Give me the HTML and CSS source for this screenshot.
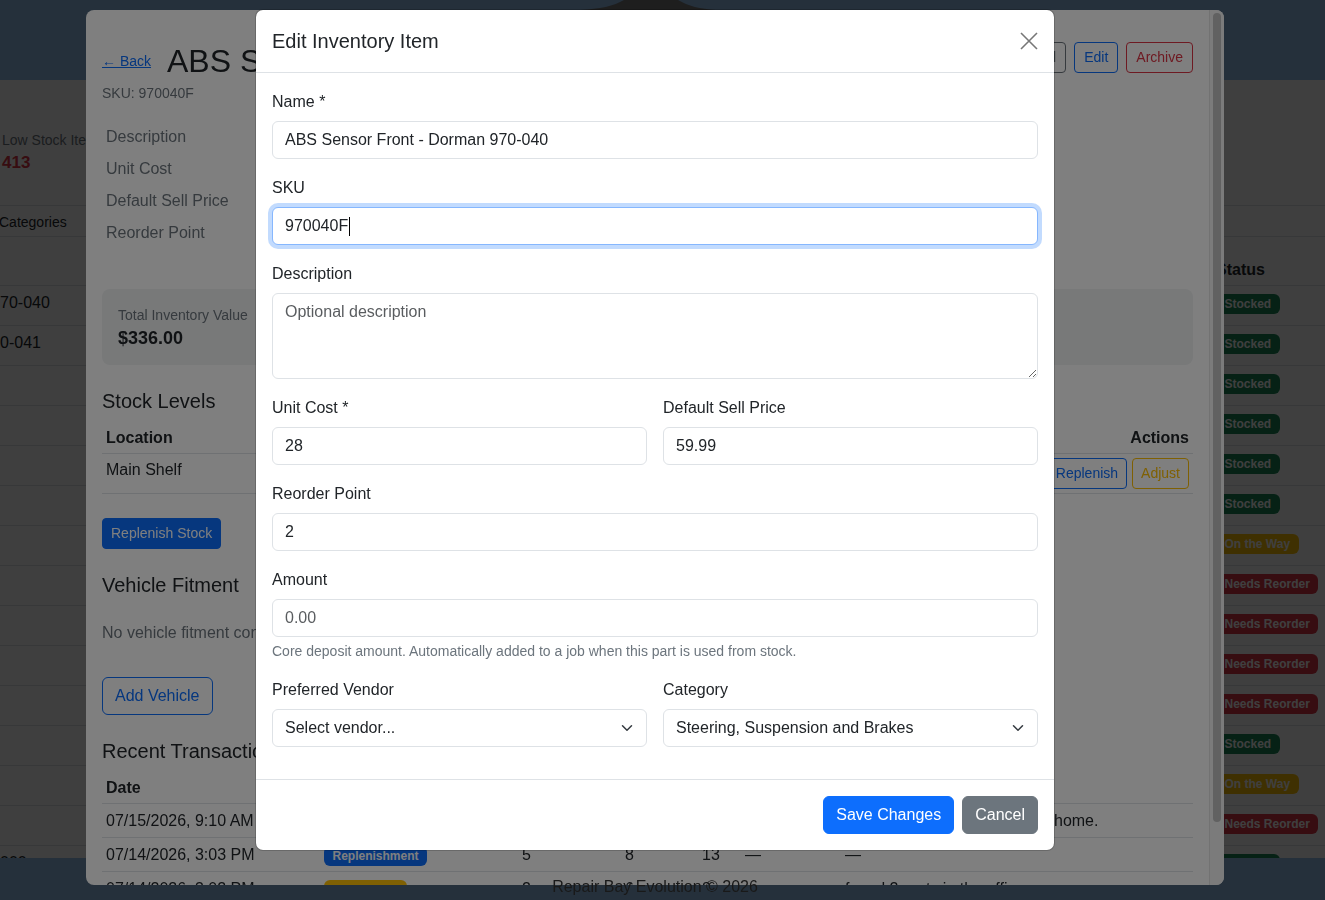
FILE: index.html
```html
<!DOCTYPE html>
<html lang="en">
<head>
  <meta charset="UTF-8" />
  <meta name="viewport" content="width=device-width, initial-scale=1.0" />
  <title>Inventory - ABS Sensor Front</title>
  <link rel="stylesheet" href="styles.css">
</head>
<body>
  <!-- inventory list behind both dialogs -->
  <div class="app">
    <header class="topbar">
      <svg class="brand" width="140" height="10" viewBox="0 0 140 10"><path d="M0 10C20 9 34 6 44 0H98C108 6 120 9 136 10Z"/></svg>
    </header>
    <main class="inventory">
      <div class="stat-strip">
        <div class="stat-label">Low Stock Items</div>
        <div class="stat-value">413</div>
      </div>
      <div class="filter-row">Categories</div>
      <table class="inv-table">
        <colgroup><col class="c-part"><col class="c-status"></colgroup>
        <thead><tr><th></th><th>Status</th></tr></thead>
        <tbody>
          <tr><td>70-040</td><td><span class="badge bg-success">Stocked</span></td></tr>
          <tr><td>0-041</td><td><span class="badge bg-success">Stocked</span></td></tr>
          <tr><td></td><td><span class="badge bg-success">Stocked</span></td></tr>
          <tr><td></td><td><span class="badge bg-success">Stocked</span></td></tr>
          <tr><td></td><td><span class="badge bg-success">Stocked</span></td></tr>
          <tr><td></td><td><span class="badge bg-success">Stocked</span></td></tr>
          <tr><td></td><td><span class="badge bg-warning">On the Way</span></td></tr>
          <tr><td></td><td><span class="badge bg-danger">Needs Reorder</span></td></tr>
          <tr><td></td><td><span class="badge bg-danger">Needs Reorder</span></td></tr>
          <tr><td></td><td><span class="badge bg-danger">Needs Reorder</span></td></tr>
          <tr><td></td><td><span class="badge bg-danger">Needs Reorder</span></td></tr>
          <tr><td></td><td><span class="badge bg-success">Stocked</span></td></tr>
          <tr><td></td><td><span class="badge bg-warning">On the Way</span></td></tr>
          <tr><td></td><td><span class="badge bg-danger">Needs Reorder</span></td></tr>
          <tr><td>000</td><td><span class="badge bg-success">Stocked</span></td></tr>
        </tbody>
      </table>
    </main>
    <footer class="site-footer"></footer>
  </div>

  <div class="backdrop"></div>

  <!-- item detail dialog -->
  <div class="detail">
    <div class="detail-body">
      <div class="detail-head">
        <div>
          <div class="title-row">
            <a class="back" href="#">&larr; Back</a>
            <h2 class="item-title">ABS Sensor Front - Dorman 970-040</h2>
          </div>
          <p class="sku">SKU: 970040F</p>
        </div>
        <div class="head-actions">
          <button class="btn btn-sm btn-outline-secondary">Print Label</button>
          <button class="btn btn-sm btn-outline-primary">Edit</button>
          <button class="btn btn-sm btn-outline-danger">Archive</button>
        </div>
      </div>

      <dl class="facts">
        <dt>Description</dt><dd>&mdash;</dd>
        <dt>Unit Cost</dt><dd>$28.00</dd>
        <dt>Default Sell Price</dt><dd>$59.99</dd>
        <dt>Reorder Point</dt><dd>2</dd>
      </dl>

      <div class="summary">
        <div>
          <div class="summary-label">Total Inventory Value</div>
          <div class="summary-value">$336.00</div>
        </div>
        <div>
          <div class="summary-label">On Hand</div>
          <div class="summary-value">12</div>
        </div>
        <div>
          <div class="summary-label">Locations</div>
          <div class="summary-value">1</div>
        </div>
      </div>

      <section class="section">
        <h5 class="section-title">Stock Levels</h5>
        <table class="data-table">
          <thead>
            <tr><th class="c-loc">Location</th><th>On Hand</th><th>Min</th><th>Max</th><th class="c-act text-end">Actions</th></tr>
          </thead>
          <tbody>
            <tr>
              <td>Main Shelf</td><td>12</td><td>2</td><td>&mdash;</td>
              <td class="c-act">
                <div class="row-actions">
                  <button class="btn btn-sm btn-outline-primary">Replenish</button>
                  <button class="btn btn-sm btn-outline-warning">Adjust</button>
                </div>
              </td>
            </tr>
          </tbody>
        </table>
        <button class="btn btn-sm btn-primary">Replenish Stock</button>
      </section>

      <section class="section">
        <h5 class="section-title">Vehicle Fitment</h5>
        <p class="empty-note">No vehicle fitment configured for this part.</p>
        <button class="btn btn-outline-primary">Add Vehicle</button>
      </section>

      <section class="section">
        <h5 class="section-title">Recent Transactions</h5>
        <table class="data-table tx-table">
          <colgroup>
            <col style="width:218px"><col style="width:198px"><col style="width:103px"><col style="width:77px">
            <col style="width:43px"><col style="width:100px"><col style="width:352px">
          </colgroup>
          <thead>
            <tr><th>Date</th><th>Type</th><th>Change</th><th>Before</th><th>After</th><th>Job</th><th>Notes</th></tr>
          </thead>
          <tbody>
            <tr><td>07/15/2026, 9:10 AM</td><td><span class="badge bg-secondary">Usage</span></td><td>-1</td><td>13</td><td>12</td><td>&mdash;</td><td>Customer took an old sensor home.</td></tr>
            <tr><td>07/14/2026, 3:03 PM</td><td><span class="badge bg-primary">Replenishment</span></td><td>5</td><td>8</td><td>13</td><td>&mdash;</td><td>&mdash;</td></tr>
            <tr><td>07/14/2026, 3:02 PM</td><td><span class="badge bg-warning">Adjustment</span></td><td>2</td><td>6</td><td>8</td><td>&mdash;</td><td>found 2 parts in the office</td></tr>
          </tbody>
        </table>
      </section>
    </div>
    <div class="scrollbar"><div class="scrollbar-thumb"></div></div>
  </div>

  <div class="legal">Repair Bay Evolution &copy; 2026</div>

  <div class="backdrop"></div>

  <!-- edit dialog -->
  <div class="edit">
    <div class="edit-head">
      <h5 class="edit-title">Edit Inventory Item</h5>
      <button class="close" aria-label="Close">
        <svg width="18" height="18" viewBox="0 0 18 18"><path d="M1 1L17 17M17 1L1 17"/></svg>
      </button>
    </div>
    <form class="edit-body">
      <div class="field">
        <label class="form-label">Name *</label>
        <input class="form-control" type="text" value="ABS Sensor Front - Dorman 970-040">
      </div>
      <div class="field">
        <label class="form-label">SKU</label>
        <div class="caret-wrap">
          <input class="form-control is-focus" type="text" value="970040F">
          <span class="caret"></span>
        </div>
      </div>
      <div class="field">
        <label class="form-label">Description</label>
        <textarea class="form-control" rows="3" placeholder="Optional description"></textarea>
      </div>
      <div class="form-row">
        <div class="field">
          <label class="form-label">Unit Cost *</label>
          <input class="form-control" type="text" value="28">
        </div>
        <div class="field">
          <label class="form-label">Default Sell Price</label>
          <input class="form-control" type="text" value="59.99">
        </div>
      </div>
      <div class="field">
        <label class="form-label">Reorder Point</label>
        <input class="form-control" type="text" value="2">
      </div>
      <div class="field">
        <label class="form-label">Amount</label>
        <input class="form-control" type="text" placeholder="0.00">
        <div class="form-text">Core deposit amount. Automatically added to a job when this part is used from stock.</div>
      </div>
      <div class="form-row">
        <div class="field">
          <label class="form-label">Preferred Vendor</label>
          <div class="select-wrap">
            <select class="form-control form-select"><option>Select vendor...</option></select>
            <svg class="chevron" width="12" height="12" viewBox="0 0 16 16"><path d="M2 5l6 6 6-6"/></svg>
          </div>
        </div>
        <div class="field">
          <label class="form-label">Category</label>
          <div class="select-wrap">
            <select class="form-control form-select"><option>Steering, Suspension and Brakes</option></select>
            <svg class="chevron" width="12" height="12" viewBox="0 0 16 16"><path d="M2 5l6 6 6-6"/></svg>
          </div>
        </div>
      </div>
    </form>
    <div class="edit-foot">
      <button class="btn btn-primary">Save Changes</button>
      <button class="btn btn-secondary">Cancel</button>
    </div>
  </div>
</body>
</html>
```

FILE: styles.css
```css
* {
  box-sizing: border-box;
}

body {
  margin: 0;
  height: 900px;
  overflow: hidden;
  font-family: "Liberation Sans", Arial, sans-serif;
  font-size: 16px;
  line-height: 1.5;
  color: #212529;
  background: #fff;
}

/* ---------- base inventory page ---------- */
.topbar {
  height: 80px;
  background: #94c0ec;
  display: flex;
  justify-content: center;
  padding-right: 25px;
}

.brand {
  fill: #787878;
}

.stat-strip {
  height: 126px;
  padding: 50px 0 0 2px;
  border-bottom: 1px solid #dee2e6;
}

.stat-label {
  font-size: 14px;
  line-height: 21px;
  color: #6c757d;
  white-space: nowrap;
}

.stat-value {
  font-size: 17px;
  line-height: 24px;
  font-weight: bold;
  color: #dc3545;
}

.filter-row {
  height: 31px;
  border-bottom: 1px solid #dee2e6;
  font-size: 14px;
  line-height: 32px;
  text-indent: -1px;
}

.inv-table {
  width: 1325px;
  table-layout: fixed;
  border-collapse: collapse;
  margin-top: 9px;
}

.inv-table .c-part {
  width: 1208px;
}

.inv-table th,
.inv-table td {
  padding: 4.5px 8px 10.5px;
  line-height: 24px;
  border-bottom: 1px solid #dee2e6;
  text-align: left;
  white-space: nowrap;
  overflow: hidden;
}

.inv-table th {
  padding: 11.5px 8px 3.5px;
}

.inv-table td:first-child {
  padding-left: 0;
}

.inv-table .badge {
  vertical-align: top;
  margin-top: 3.5px;
}

.site-footer {
  position: fixed;
  left: 0;
  right: 0;
  bottom: 0;
  height: 42px;
  background: #94c0ec;
}

.badge {
  display: inline-block;
  padding: 4px 8.5px;
  font-size: 12px;
  font-weight: bold;
  line-height: 1;
  color: #fff;
  border-radius: 6px;
  white-space: nowrap;
}

.bg-success { background: #198754; }
.bg-warning { background: #ffc107; }
.bg-danger { background: #dc3545; }
.bg-primary { background: #0d6efd; }
.bg-secondary { background: #6c757d; }

.backdrop {
  position: fixed;
  inset: 0;
  background: rgba(0, 0, 0, 0.5);
}

/* ---------- buttons ---------- */
.btn {
  display: inline-block;
  padding: 6px 12px;
  font-family: inherit;
  font-size: 16px;
  line-height: 24px;
  border: 1px solid transparent;
  border-radius: 6px;
  background: none;
  color: #212529;
  white-space: nowrap;
  cursor: pointer;
}

.btn-sm {
  padding: 4px 8px;
  font-size: 14px;
  line-height: 21px;
  border-radius: 4px;
}

.btn-primary { background: #0d6efd; border-color: #0d6efd; color: #fff; }
.btn-secondary { background: #6c757d; border-color: #6c757d; color: #fff; }
.btn-outline-primary { color: #0d6efd; border-color: #0d6efd; }
.btn-outline-secondary { color: #6c757d; border-color: #6c757d; }
.btn-outline-danger { color: #dc3545; border-color: #dc3545; }
.btn-outline-warning { color: #ffc107; border-color: #ffc107; }

/* ---------- detail dialog ---------- */
.detail {
  position: fixed;
  left: 86px;
  top: 10px;
  width: 1138px;
  height: 875px;
  display: flex;
  background: #fff;
  border-radius: 8px;
  overflow: hidden;
}

.detail-body {
  flex: 1;
  min-width: 0;
  height: 100%;
  overflow: hidden;
  padding: 32px 16px 0;
}

.scrollbar {
  width: 15px;
  flex-shrink: 0;
  padding: 3px;
  background: #f6f6f6;
  border-left: 1px solid #e4e4e4;
}

.scrollbar-thumb {
  height: 809px;
  background: #c2c2c2;
  border-radius: 5px;
}

.detail-head {
  display: flex;
  justify-content: space-between;
  align-items: flex-start;
  margin-bottom: 21px;
}

.title-row {
  display: flex;
  align-items: center;
  gap: 16px;
}

.back {
  font-size: 14px;
  color: #0d6efd;
}

.item-title {
  margin: 0;
  font-size: 32px;
  font-weight: 500;
  line-height: 1.2;
  white-space: nowrap;
}

.sku {
  margin: 3px 0 0;
  font-size: 14px;
  line-height: 21px;
  color: #6c757d;
}

.head-actions {
  display: flex;
  gap: 8px;
}

.head-actions .btn-sm {
  padding: 4px 9px;
}

.facts {
  display: grid;
  grid-template-columns: 200px 1fr;
  row-gap: 8px;
  margin: 0 0 44px;
}

.facts dt {
  padding-left: 4px;
  color: #6c757d;
}

.facts dd {
  margin: 0;
}

.summary {
  display: flex;
  gap: 48px;
  background: #f0f2f3;
  border-radius: 8px;
  padding: 16px 16px 15px;
  margin-bottom: 24px;
}

.summary-label {
  font-size: 14px;
  line-height: 21px;
  color: #6c757d;
}

.summary-value {
  font-size: 18px;
  line-height: 24px;
  font-weight: bold;
}

.section {
  margin-bottom: 24px;
}

.section-title {
  margin: 0 0 8px;
  font-size: 20px;
  font-weight: 500;
  line-height: 24px;
}

.data-table {
  width: 100%;
  border-collapse: collapse;
  margin-bottom: 24px;
}

.data-table th,
.data-table td {
  padding: 4px;
  line-height: 24px;
  border-bottom: 1px solid #dee2e6;
  text-align: left;
  vertical-align: top;
  white-space: nowrap;
}

.data-table th {
  padding: 5px 4px 3px;
}

.data-table .c-loc {
  width: 170px;
}

.data-table .c-act {
  width: 1%;
}

.data-table th.text-end {
  text-align: right;
}

.row-actions {
  display: flex;
  justify-content: flex-end;
  gap: 5px;
}

.tx-table {
  table-layout: fixed;
}

.tx-table td {
  padding: 5px 4px 4px;
  overflow: hidden;
}

.empty-note {
  margin: 24px 0 32px;
  color: #6c757d;
}

.legal {
  position: fixed;
  left: 0;
  right: 15px;
  top: 876px;
  text-align: center;
  line-height: 22px;
  color: #333;
}

/* ---------- edit dialog ---------- */
.edit {
  position: fixed;
  left: 255px;
  top: 9px;
  width: 800px;
  background: #fff;
  background-clip: padding-box;
  border: 1px solid rgba(0, 0, 0, 0.175);
  border-radius: 8px;
}

.edit-head {
  display: flex;
  align-items: center;
  justify-content: space-between;
  padding: 16px;
  border-bottom: 1px solid #dee2e6;
}

.edit-title {
  margin: 0;
  font-size: 20px;
  font-weight: 500;
  line-height: 30px;
}

.close {
  display: flex;
  width: 18px;
  height: 18px;
  padding: 0;
  border: 0;
  background: none;
  cursor: pointer;
}

.close path {
  stroke: #777;
  stroke-width: 1.6;
}

.edit-body {
  padding: 16px;
}

.field {
  margin-bottom: 16px;
}

.form-label {
  display: block;
  margin-bottom: 8px;
  padding-top: 1px;
  height: 24px;
}

.form-control {
  display: block;
  width: 100%;
  height: 38px;
  padding: 6px 12px;
  font-family: inherit;
  font-size: 16px;
  line-height: 24px;
  color: #212529;
  background: #fff;
  border: 1px solid #dee2e6;
  border-radius: 6px;
  appearance: none;
  outline: none;
}

.form-control::placeholder {
  color: rgba(33, 37, 41, 0.75);
}

.form-control.is-focus {
  border-color: #86b7fe;
  box-shadow: 0 0 0 4px rgba(13, 110, 253, 0.25);
}

textarea.form-control {
  height: 86px;
  resize: vertical;
}

.form-select {
  padding-right: 36px;
}

.select-wrap,
.caret-wrap {
  position: relative;
}

.chevron {
  position: absolute;
  right: 14px;
  top: 13px;
  fill: none;
  stroke: #343a40;
  stroke-width: 2;
  stroke-linecap: round;
  stroke-linejoin: round;
  pointer-events: none;
}

.caret {
  position: absolute;
  left: 77px;
  top: 10px;
  width: 1px;
  height: 19px;
  background: #000;
}

.form-text {
  margin-top: 4px;
  font-size: 14px;
  line-height: 20px;
  color: #6c757d;
}

.form-row {
  display: grid;
  grid-template-columns: 1fr 1fr;
  column-gap: 16px;
}

.edit-foot {
  display: flex;
  justify-content: flex-end;
  gap: 8px;
  padding: 16px;
  border-top: 1px solid #dee2e6;
}
```
